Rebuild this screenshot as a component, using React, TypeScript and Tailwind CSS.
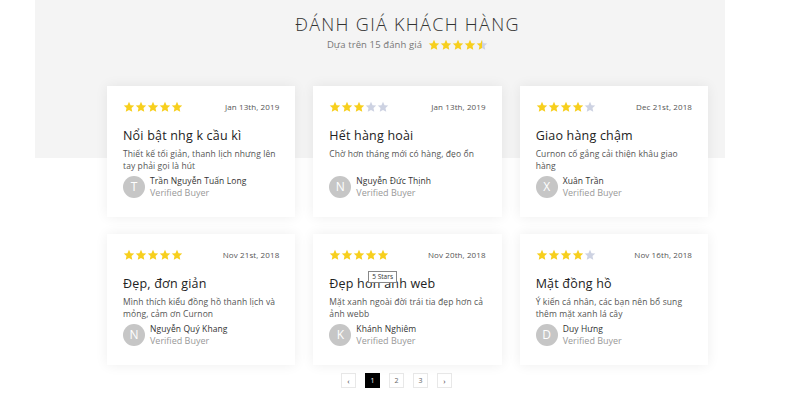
import React from "react";

const YELLOW = "#f7cf1d";
const GRAY = "#cdd2e2";

function Star({ fill, size, id }: { fill: number; size: number; id: string }) {
  return (
    <svg width={size} height={size} viewBox="0 0 24 24">
      <defs>
        <linearGradient id={id}>
          <stop offset={`${fill * 100}%`} stopColor={YELLOW} />
          <stop offset={`${fill * 100}%`} stopColor={GRAY} />
        </linearGradient>
      </defs>
      <polygon
        points="12,1.5 15.1,8.3 22.5,9.1 17,14.1 18.5,21.5 12,17.8 5.5,21.5 7,14.1 1.5,9.1 8.9,8.3"
        fill={`url(#${id})`}
      />
    </svg>
  );
}

function Stars({ rating, size, prefix }: { rating: number; size: number; prefix: string }) {
  return (
    <div className="flex items-center">
      {[0, 1, 2, 3, 4].map((i) => (
        <Star key={i} id={`${prefix}-${i}`} size={size} fill={Math.max(0, Math.min(1, rating - i))} />
      ))}
    </div>
  );
}

type Review = {
  rating: number;
  date: string;
  title: string;
  body: string;
  name: string;
  initial: string;
  tooltip?: boolean;
};

const reviews: Review[] = [
  { rating: 5, date: "Jan 13th, 2019", title: "Nổi bật nhg k cầu kì", body: "Thiết kế tối giản, thanh lịch nhưng lên tay phải gọi là hút", name: "Trần Nguyễn Tuấn Long", initial: "T" },
  { rating: 3, date: "Jan 13th, 2019", title: "Hết hàng hoài", body: "Chờ hơn tháng mới có hàng, đẹo ổn", name: "Nguyễn Đức Thịnh", initial: "N" },
  { rating: 4, date: "Dec 21st, 2018", title: "Giao hàng chậm", body: "Curnon cố gắng cải thiện khâu giao hàng", name: "Xuân Trần", initial: "X" },
  { rating: 5, date: "Nov 21st, 2018", title: "Đẹp, đơn giản", body: "Mình thích kiểu đồng hồ thanh lịch và mỏng, cảm ơn Curnon", name: "Nguyễn Quý Khang", initial: "N" },
  { rating: 5, date: "Nov 20th, 2018", title: "Đẹp hơn ảnh web", body: "Mặt xanh ngoài đời trái tia đẹp hơn cả ảnh webb", name: "Khánh Nghiêm", initial: "K", tooltip: true },
  { rating: 4, date: "Nov 16th, 2018", title: "Mặt đồng hồ", body: "Ý kiến cá nhân, các bạn nên bổ sung thêm mặt xanh lá cây", name: "Duy Hưng", initial: "D" },
];

function Card({ r, idx }: { r: Review; idx: number }) {
  return (
    <div className="relative bg-white h-[131px] px-4 pt-[15px] shadow-[0_0_12px_rgba(0,0,0,0.07)]">
      <div className="flex items-center justify-between h-[12px]">
        <Stars rating={r.rating} size={12} prefix={`c${idx}`} />
        <span className="text-[8px] text-[#555] tracking-[0.1px]">{r.date}</span>
      </div>
      <div className="mt-[14px] text-[12.5px] leading-[18px] text-[#222] tracking-[0.2px]">{r.title}</div>
      <div className="mt-[3px] h-[24px] text-[8.5px] leading-[12px] text-[#555] tracking-[0.1px]">{r.body}</div>
      <div className="mt-[3px] flex items-center gap-[5px]">
        <div className="w-[22px] h-[22px] rounded-full bg-[#c6c6c6] text-white text-[12px] flex items-center justify-center">
          {r.initial}
        </div>
        <div className="flex flex-col">
          <span className="text-[8.5px] leading-[12px] font-medium text-[#333] tracking-[0.1px]">{r.name}</span>
          <span className="text-[9px] leading-[12px] text-[#999]">Verified Buyer</span>
        </div>
      </div>
      {r.tooltip && (
        <div className="absolute left-[55px] top-[37px] border border-[#888] bg-white px-[3px] text-[6.5px] leading-[10px] text-[#333]">
          5 Stars
        </div>
      )}
    </div>
  );
}

export default function App() {
  return (
    <div
      className="w-[800px] h-[400px] bg-white overflow-hidden"
      style={{ fontFamily: '"Open Sans", "Noto Sans", sans-serif' }}
    >
      <div className="ml-[35px] w-[690px] h-[400px] bg-[linear-gradient(to_bottom,#f4f4f4_158px,#ffffff_158px)] pl-[72px]">
        <div className="w-[601px] flex flex-col items-center">
          <div className="pt-[13px] text-[18px] leading-[22px] font-light tracking-[1.3px] text-[#333]">
            ĐÁNH GIÁ KHÁCH HÀNG
          </div>
          <div className="mt-[3px] flex items-center gap-[6px]">
            <span className="text-[9.5px] text-[#777] tracking-[0.1px]">Dựa trên 15 đánh giá</span>
            <Stars rating={4.5} size={12} prefix="h" />
          </div>
        </div>
        <div className="mt-[34px] w-[601px] grid grid-cols-3 gap-x-[18px] gap-y-[17px]">
          {reviews.map((r, i) => (
            <Card key={i} r={r} idx={i} />
          ))}
        </div>
        <div className="ml-[234px] mt-[8px] flex items-center gap-[9px]">
          <div className="w-[15px] h-[15px] border border-[#e8e8e8] text-[8px] flex items-center justify-center text-[#444]">‹</div>
          <div className="w-[15px] h-[15px] bg-black text-white text-[7px] flex items-center justify-center">1</div>
          <div className="w-[15px] h-[15px] border border-[#e8e8e8] text-[7px] text-[#666] flex items-center justify-center">2</div>
          <div className="w-[15px] h-[15px] border border-[#e8e8e8] text-[7px] text-[#666] flex items-center justify-center">3</div>
          <div className="w-[15px] h-[15px] border border-[#e8e8e8] text-[8px] flex items-center justify-center text-[#444]">›</div>
        </div>
      </div>
    </div>
  );
}
